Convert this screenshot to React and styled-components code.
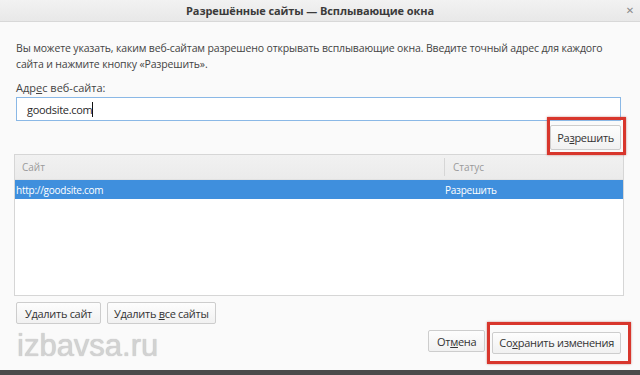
import React from 'react';
import styled, { createGlobalStyle } from 'styled-components';

const GlobalStyle = createGlobalStyle`
    html, body {
        margin: 0;
        padding: 0;
        width: 640px;
        height: 375px;
        overflow: hidden;
        background: #f8f8f8;
    }
    * {
        box-sizing: border-box;
    }
`;

const Dialog = styled.div`
    display: flex;
    flex-direction: column;
    width: 640px;
    height: 375px;
    font-family: "Open Sans", "Noto Sans", sans-serif;
    color: #3c3c3c;
`;

const TitleBar = styled.div`
    display: grid;
    grid-template-columns: 1fr 20px;
    align-items: center;
    height: 22px;
    background: linear-gradient(#f2f2f2, #e8e8e8);
    border-bottom: 1px solid #d8d8d8;
`;

const Title = styled.div`
    text-align: center;
    font-size: 11px;
    font-weight: 700;
    color: #3a3a3a;
    letter-spacing: -0.1px;
`;

const Close = styled.div`
    font-family: "DejaVu Sans", sans-serif;
    font-size: 10px;
    line-height: 20px;
    color: #8a8a8a;
    text-align: center;
`;

const Body = styled.div`
    flex: 1;
    display: flex;
    flex-direction: column;
    padding: 18px 19px 0 16px;
    background: #fafafa;
`;

const Intro = styled.p`
    margin: 0;
    font-size: 10.5px;
    line-height: 16px;
    letter-spacing: -0.15px;
    white-space: nowrap;
    color: #444;
`;

const Label = styled.div`
    margin-top: 8px;
    font-size: 11px;
    line-height: 16px;
    color: #444;
`;

const Key = styled.span`
    text-decoration: underline;
`;

const Input = styled.div`
    display: flex;
    align-items: center;
    margin-top: 1px;
    height: 24px;
    padding-left: 10px;
    background: #fff;
    border: 1px solid #8ab8e6;
    font-size: 11px;
    letter-spacing: -0.3px;
    color: #2a2a2a;
`;

const Caret = styled.span`
    display: inline-block;
    width: 1px;
    height: 15px;
    background: #111;
`;

const ActionRow = styled.div`
    display: flex;
    justify-content: ${({ $align }) => $align || 'flex-start'};
    gap: ${({ $gap }) => $gap || 6}px;
    margin-top: ${({ $top }) => $top}px;
`;

const Highlight = styled.div`
    position: relative;
    &::after {
        content: '';
        position: absolute;
        inset: ${({ $inset }) => $inset};
        border: 3px solid #d8362c;
        box-shadow: 0 0 2px rgba(150, 30, 20, 0.5);
        pointer-events: none;
    }
`;

const Button = styled.button`
    height: ${({ $h }) => $h || 22}px;
    padding: 0 ${({ $px }) => $px || 8}px;
    background: linear-gradient(#fdfdfd, #f1f1f1);
    border: 1px solid #cdcdcd;
    border-radius: 2px;
    font-family: "Open Sans", "Noto Sans", sans-serif;
    font-size: 11px;
    letter-spacing: -0.3px;
    color: #333;
    cursor: pointer;
    white-space: nowrap;
`;

const Table = styled.div`
    display: flex;
    flex-direction: column;
    margin: 4px -3px 0 -2px;
    height: 142px;
    background: #fff;
    border: 1px solid #d6d6d6;
`;

const HeadRow = styled.div`
    display: grid;
    grid-template-columns: 429px 1fr;
    height: 25px;
    align-items: center;
    background: linear-gradient(#f1f1f1, #ebebeb);
    border-bottom: 1px solid #e2e2e2;
    font-size: 10px;
    color: #9a9a9a;
`;

const HeadCell = styled.div`
    padding-left: ${({ $pl }) => $pl}px;
    border-left: ${({ $divider }) => ($divider ? '1px solid #d6d6d6' : 'none')};
    line-height: 18px;
`;

const Row = styled.div`
    display: grid;
    grid-template-columns: 430px 1fr;
    height: 19px;
    align-items: center;
    background: ${({ $selected }) => ($selected ? '#3f8fdd' : 'transparent')};
    color: ${({ $selected }) => ($selected ? '#fff' : '#333')};
    font-size: 10px;
    letter-spacing: -0.25px;
`;

const Cell = styled.div`
    padding-left: ${({ $pl }) => $pl}px;
`;

const Footer = styled.div`
    display: flex;
    justify-content: space-between;
    align-items: flex-start;
    margin-top: 6px;
`;

const Watermark = styled.div`
    font-family: "Liberation Sans", Arial, sans-serif;
    font-size: 31px;
    line-height: 31px;
    color: #d2d2d2;
    text-shadow: 0 0 1px #b9b9b9;
    margin-left: 1px;
`;

const BottomStrip = styled.div`
    height: 5px;
    background: #4b4b4b;
`;

const sites = [{ site: 'http://goodsite.com', status: 'Разрешить', selected: true }];

export default function App() {
    return (
        <Dialog>
            <GlobalStyle />
            <TitleBar>
                <Title>Разрешённые сайты — Всплывающие окна</Title>
                <Close>✕</Close>
            </TitleBar>
            <Body>
                <Intro>
                    Вы можете указать, каким веб-сайтам разрешено открывать всплывающие окна. Введите точный адрес для каждого
                    <br />
                    сайта и нажмите кнопку «Разрешить».
                </Intro>
                <Label>
                    Адр<Key>е</Key>с веб-сайта:
                </Label>
                <Input>
                    goodsite.com<Caret />
                </Input>
                <ActionRow $align="flex-end" $top={4}>
                    <Highlight $inset="-8px -5px -5px -3px">
                        <Button $h={25} $px={6}>
                            Ра<Key>з</Key>решить
                        </Button>
                    </Highlight>
                </ActionRow>
                <Table>
                    <HeadRow>
                        <HeadCell $pl={7}>Сайт</HeadCell>
                        <HeadCell $pl={8} $divider>Статус</HeadCell>
                    </HeadRow>
                    {sites.map(item => (
                        <Row key={item.site} $selected={item.selected}>
                            <Cell $pl={1}>{item.site}</Cell>
                            <Cell $pl={0}>{item.status}</Cell>
                        </Row>
                    ))}
                </Table>
                <ActionRow $top={6}>
                    <Button>Удалить сайт</Button>
                    <Button $px={6}>
                        Удалить <Key>в</Key>се сайты
                    </Button>
                </ActionRow>
                <Footer>
                    <Watermark>izbavsa.ru</Watermark>
                    <ActionRow $top={0} $gap={7}>
                        <Button>
                            От<Key>м</Key>ена
                        </Button>
                        <Highlight $inset="-8px -10px -10px -5px">
                            <Button $px={6}>
                                Со<Key>х</Key>ранить изменения
                            </Button>
                        </Highlight>
                    </ActionRow>
                </Footer>
            </Body>
            <BottomStrip />
        </Dialog>
    );
}
